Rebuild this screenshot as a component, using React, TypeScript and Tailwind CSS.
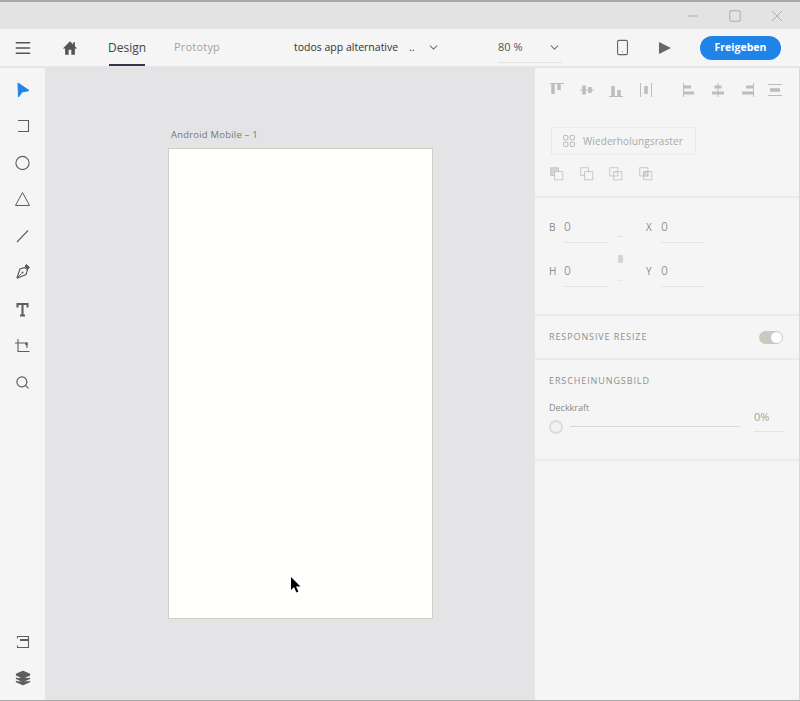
import { ChevronDown, Layers, Menu, Minus, Search, Smartphone, Square, X } from 'lucide-react';
import type { ReactNode } from 'react';

function Glyph({ children, size = 18, className = '' }: { children: ReactNode; size?: number; className?: string }) {
  return (
    <svg width={size} height={size} viewBox="0 0 18 18" fill="none" stroke="currentColor" className={className}>
      {children}
    </svg>
  );
}

function Field({ label, value }: { label: string; value: string }) {
  return (
    <div className="flex w-[70px] items-start">
      <span className="w-[15px] pt-[3px] text-[10px] text-[#8a8a8a]">{label}</span>
      <span className="h-[26px] w-[44px] border-b border-[#e4e4e4] text-[12px] leading-[20px] text-[#9a9a9a]">{value}</span>
    </div>
  );
}

export default function App() {
  return (
    <div className="flex h-[701px] w-[800px] flex-col overflow-hidden border-t-2 border-b border-[#a9a9a9] bg-[#f5f5f5] font-['Open_Sans',sans-serif]">
      {/* title bar */}
      <div className="flex h-[27px] shrink-0 items-center justify-end bg-[#e3e3e3] pr-[2px] text-[#a8a8a0]">
        <span className="flex w-[42px] justify-center"><Minus size={14} strokeWidth={1.5} className="scale-x-[1.1]" /></span>
        <span className="flex w-[42px] justify-center"><Square size={14} strokeWidth={1.6} /></span>
        <span className="flex w-[42px] justify-center"><X size={20} strokeWidth={1} className="text-[#a5a5a5]" /></span>
      </div>

      {/* toolbar */}
      <div className="flex h-[37px] shrink-0 items-center bg-[#f5f5f5] text-[#555]">
        <Menu size={18} strokeWidth={2} className="ml-[14px] scale-x-[1.1]" />
        <svg width="16" height="16" viewBox="0 0 18 18" fill="#555" className="ml-[30px]">
          <path d="M9 1.500 1 9.500h2.500V16.500h4v-5.500h3v5.500h4V9.500H17l-2.500-2.400V2.500h-2v2.700Z" />
        </svg>
        <div className="ml-[31px] flex h-full w-[36px] items-center justify-center border-b-2 border-[#34344a] pt-[2px] text-[12px] text-[#444]">Design</div>
        <div className="ml-[29px] w-[46px] whitespace-nowrap text-[11px] tracking-[0.2px] text-[#a3a39d]">Prototyp</div>
        <div className="ml-[74px] flex w-[146px] items-center text-[10.500px] text-[#333]">
          <span className="w-[115px] whitespace-nowrap">todos app alternative</span>
          <span className="w-[18px]">..</span>
          <ChevronDown size={13} className="text-[#777]" />
        </div>
        <div className="ml-[58px] flex h-[30px] w-[64px] items-center justify-between border-b border-[#e2e2e2] pr-[1px] pt-[1px] text-[11px] text-[#555]">
          <span>80 %</span>
          <ChevronDown size={13} className="text-[#777]" />
        </div>
        <Smartphone size={17} strokeWidth={1.6} className="ml-[52px] text-[#666]" />
        <svg width="18" height="18" viewBox="0 0 18 18" fill="#666" className="ml-[24px]">
          <path d="M4 3 16 9 4 15Z" />
        </svg>
        <button className="ml-[27px] h-[24px] w-[81px] rounded-full bg-[#1f83e8] text-[10.500px] font-bold text-white">Freigeben</button>
      </div>

      <div className="flex min-h-0 flex-1 border-t-2 border-[#e6e6e6]">
        {/* tool rail */}
        <div className="flex w-[45px] shrink-0 flex-col items-center bg-[#f5f5f5] pt-[13px] pb-[14px] text-[#5e5e5e]">
          <div className="flex flex-col items-center gap-[18.4px]">
            <Glyph><path d="M4 2 15 9.500 8 11 4.500 16Z" fill="#1f83e8" stroke="#1f83e8" /></Glyph>
            <Glyph><path d="M4 3.500h10.500v11H4" strokeWidth="1.1" /></Glyph>
            <Glyph><circle cx="8.500" cy="9" r="6.600" strokeWidth="1.1" /></Glyph>
            <Glyph><path d="M8.500 2.500 15.500 15.500H1.500Z" strokeWidth="1" /></Glyph>
            <Glyph><path d="M3 15 14 3.500" strokeWidth="1.1" /></Glyph>
            <Glyph>
              <path d="M11 4.500 13.500 7 12 11.500 3.500 15l-.5-.5L6 6Z" strokeWidth="1.2" />
              <path d="M11 3 12.500 1.500 15.500 4.500 14 6Z" fill="currentColor" />
              <path d="M3.500 14.500 7.500 10.500" strokeWidth="1" />
              <circle cx="8.500" cy="9.500" r="1" fill="currentColor" stroke="none" />
            </Glyph>
            <Glyph className="mt-[2px]">
              <path d="M3.500 6.500V3h10v3.500M8.500 3v11.500M6 14.500h5" strokeWidth="2.100" />
            </Glyph>
            <Glyph>
              <path d="M4 1v12.500H15.500M1 5h12v5" strokeWidth="1.1" />
              <circle cx="12.500" cy="6" r="1.400" fill="currentColor" stroke="none" />
            </Glyph>
            <Search size={15} strokeWidth={1.9} className="mt-[1px]" />
          </div>
          <div className="mt-auto flex flex-col items-center gap-[19px]">
            <Glyph>
              <path d="M3.500 5.500V3.500h11v11h-11v-2" strokeWidth="1.1" />
              <path d="M6 7h8.500" strokeWidth="2" />
            </Glyph>
            <Layers size={16} fill="#5e5e5e" strokeWidth={1.8} />
          </div>
        </div>

        {/* canvas */}
        <div className="relative flex-1 bg-[#e4e4e6] pl-[123px] pt-[60px]">
          <div className="h-[20px] pl-[3px] text-[9.500px] leading-[14px] tracking-[0.2px] text-[#777]">Android Mobile – 1</div>
          <div className="h-[471px] w-[265px] border border-[#cfcfc6] bg-[#fffffd]" />
          <svg width="12" height="18" viewBox="0 0 12 18" className="absolute left-[245px] top-[508px]">
            <path d="M1 1v13l3-3 2.400 5.500 2-.9L6 10.500h4.500Z" fill="#000" />
          </svg>
        </div>

        {/* properties */}
        <div className="w-[265px] shrink-0 border-r border-[#d8d8d8] bg-[#f5f5f5] text-[#bdbdbd]">
          <div className="h-[130px] border-b-2 border-[#ebebeb] px-[13px] pt-[13px]">
            <div className="flex items-center">
              <div className="flex gap-[11.500px]">
                <Glyph><path d="M2 2.500h14" /><path d="M5 3v10M11 3v6" strokeWidth="3.500" /></Glyph>
                <Glyph><path d="M2 9h14" /><path d="M6 4.500v9M12 6v6" strokeWidth="3.500" /></Glyph>
                <Glyph><path d="M2 15.500h14" /><path d="M6 5v10M12 9v6" strokeWidth="3.500" /></Glyph>
                <Glyph><path d="M3.500 2v14M14.500 2v14" /><path d="M9 5v8" strokeWidth="3.500" /></Glyph>
              </div>
              <div className="ml-[26px] flex gap-[10.600px]">
                <Glyph><path d="M2.500 2v14" /><path d="M3 6h7M3 12h10" strokeWidth="3" /></Glyph>
                <Glyph><path d="M9 2v14" /><path d="M5.500 6h7M3 12h12" strokeWidth="3" /></Glyph>
                <Glyph><path d="M15.500 2v14" /><path d="M8 6h7M4 12h11" strokeWidth="3" /></Glyph>
                <Glyph><path d="M2 3.500h14M2 14.500h14" /><path d="M4 9h10" strokeWidth="3.500" /></Glyph>
              </div>
            </div>
            <div className="ml-[3px] mt-[28px] flex h-[28px] w-[145px] items-center border border-[#ebebeb] pl-[10px] text-[#a9a9a9]">
              <Glyph size={14}>
                <rect x="2" y="2" width="5.500" height="5.500" rx="1" />
                <rect x="10.500" y="2" width="5.500" height="5.500" rx="1" />
                <rect x="2" y="10.500" width="5.500" height="5.500" rx="1" />
                <rect x="10.500" y="10.500" width="5.500" height="5.500" rx="1" />
              </Glyph>
              <span className="ml-[7px] text-[10px] tracking-[0.1px]">Wiederholungsraster</span>
            </div>
            <div className="ml-[2px] mt-[12px] flex gap-[15.500px]">
              <Glyph size={14}><rect x="1" y="1" width="10" height="10" fill="#d6d6d6" /><rect x="6" y="6" width="10.500" height="10.500" fill="#f5f5f5" /></Glyph>
              <Glyph size={14}><rect x="1" y="1" width="10" height="10" /><rect x="6" y="6" width="10.500" height="10.500" fill="#f5f5f5" /></Glyph>
              <Glyph size={14}><rect x="1" y="1" width="10.500" height="10.500" /><rect x="6" y="6" width="10.500" height="10.500" /><path d="M7 6.500h4" /></Glyph>
              <Glyph size={14}><rect x="1" y="1" width="10.500" height="10.500" /><rect x="6" y="6" width="10.500" height="10.500" /><rect x="6" y="6" width="5.500" height="5.500" fill="#d6d6d6" /></Glyph>
            </div>
          </div>

          <div className="flex h-[118px] border-b-2 border-[#ebebeb] px-[14px] pt-[19px]">
            <div className="flex flex-col gap-[18px]">
              <Field label="B" value="0" />
              <Field label="H" value="0" />
            </div>
            <div className="ml-[-2px] mr-[23px] flex h-[64px] w-[6px] flex-col items-center justify-between pt-[19px] text-[#d8d8d8]">
              <span className="h-[1px] w-[6px] bg-[#e0e0e0]" />
              <span className="h-[8px] w-[5px] rounded-[1px] bg-[#d4d4d4]" />
              <span className="h-[1px] w-[6px] bg-[#e8e8e8]" />
            </div>
            <div className="flex flex-col gap-[18px]">
              <Field label="X" value="0" />
              <Field label="Y" value="0" />
            </div>
          </div>

          <div className="flex h-[44px] items-center justify-between border-b-2 border-[#ebebeb] pl-[14px] pr-[16px]">
            <span className="text-[9px] tracking-[0.9px] text-[#8e8e8e]">RESPONSIVE RESIZE</span>
            <span className="flex h-[13px] w-[24px] items-center justify-end rounded-full bg-[#c9c9c2] pr-[1px]">
              <span className="h-[11px] w-[11px] rounded-full bg-white" />
            </span>
          </div>

          <div className="h-[101px] border-b-2 border-[#ebebeb] pl-[14px] pr-[16px]">
            <div className="h-[24px] overflow-hidden pt-[16px] text-[9px] leading-[10px] tracking-[0.9px] text-[#8e8e8e]">ERSCHEINUNGSBILD</div>
            <div className="mt-[18px] text-[9px] leading-[12px] text-[#8a8a8a]">Deckkraft</div>
            <div className="flex items-start">
              <span className="mt-[6px] h-[14px] w-[14px] rounded-full border-2 border-[#dcdcdc] bg-[#f2f2f2]" />
              <span className="ml-[7px] mt-[12px] h-[1px] w-[170px] bg-[#d9d9d9]" />
              <span className="ml-[14px] mt-[-7px] h-[25px] w-[29px] border-b border-[#e4e4e4] text-[11px] leading-[20px] text-[#a3a3a3]">0%</span>
            </div>
          </div>
        </div>
      </div>
    </div>
  );
}
